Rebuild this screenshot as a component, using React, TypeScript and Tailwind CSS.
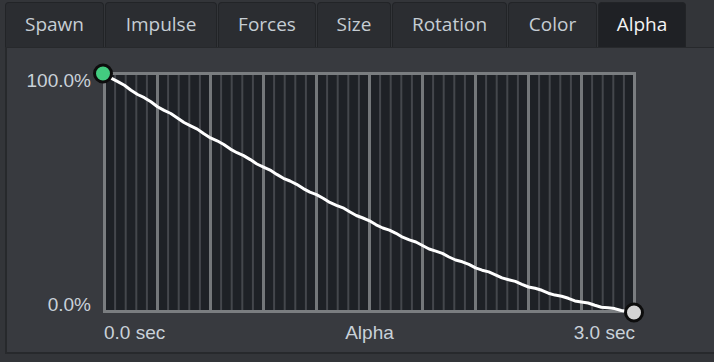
const tabs = [
  { label: 'Spawn', w: 99 },
  { label: 'Impulse', w: 112 },
  { label: 'Forces', w: 98 },
  { label: 'Size', w: 74 },
  { label: 'Rotation', w: 115 },
  { label: 'Color', w: 89 },
  { label: 'Alpha', w: 88, active: true },
]

// plot box inside the svg (svg origin sits at page x=91, y=62)
const L = 13.5
const T = 11.5
const R = 543.5
const B = 249.5

function CurveGraph() {
  const majors = Array.from({ length: 11 }, (_, i) => L + i * 53)
  const minors: number[] = []
  for (let i = 0; i < 10; i++) {
    for (let j = 1; j < 5; j++) minors.push(L + i * 53 + j * 10.6)
  }

  // alpha falloff, a bit steeper at the start
  const pts: string[] = []
  for (let i = 0; i <= 80; i++) {
    const t = i / 80
    const drop = 1 - Math.pow(1 - t, 1.4)
    const wob = i > 0 && i < 80 ? Math.sin(i * 1.7) * 0.6 : 0
    pts.push(`${(L + t * (R - L)).toFixed(1)},${(T + drop * (B - T) + wob).toFixed(1)}`)
  }

  return (
    <svg width={560} height={260} className="block overflow-visible">
      <rect x={L} y={T} width={R - L} height={B - T} fill="#1e2126" />
      {minors.map((x, i) => (
        <line key={`m${i}`} x1={x} y1={T} x2={x} y2={B} stroke="#44474c" strokeWidth={2} />
      ))}
      {majors.slice(1, -1).map((x, i) => (
        <line key={`M${i}`} x1={x} y1={T} x2={x} y2={B} stroke="#74777a" strokeWidth={3} />
      ))}
      <rect x={L} y={T} width={R - L} height={B - T} fill="none" stroke="#7a7d80" strokeWidth={3} />
      <polyline points={pts.join(' ')} fill="none" stroke="#ffffff" strokeWidth={3} strokeLinejoin="round" />
      <circle cx={L - 1.5} cy={T} r={8.5} fill="#43cc80" stroke="#0d0d0d" strokeWidth={3} />
      <circle cx={R - 0.5} cy={B + 1} r={8.5} fill="#d4d4d4" stroke="#0d0d0d" strokeWidth={3} />
    </svg>
  )
}

export default function App() {
  return (
    <div className="w-[714px] h-[362px] bg-[#333539] overflow-hidden flex flex-col">
      <div className="flex items-end gap-[1px] pl-[5px] pt-[2px] h-[47px] shrink-0">
        {tabs.map((t) => (
          <div
            key={t.label}
            style={{ width: t.w }}
            className={`h-[45px] pb-[1px] flex items-center justify-center rounded-t-[4px] border border-b-0 border-[#222427] font-['Open_Sans',sans-serif] text-[19px] ${
              t.active ? 'bg-[#1f2125] text-[#f4f4f4]' : 'bg-[#2b2d31] text-[#c6cdd4]'
            }`}
          >
            {t.label}
          </div>
        ))}
      </div>

      <div className="ml-[5px] h-[307px] shrink-0 bg-[#383a3f] border-l-2 border-t border-b-2 border-[#27292c] pt-[14px] font-['Liberation_Sans',Arial,sans-serif] text-[19px] leading-[22px] text-[#c9d1d9]">
        <div className="flex items-start">
          <div className="w-[84px] h-[246px] mt-[8px] flex flex-col justify-between items-end">
            <span>100.0%</span>
            <span>0.0%</span>
          </div>
          <CurveGraph />
        </div>
        <div className="ml-[97px] w-[531px] flex justify-between">
          <span>0.0 sec</span>
          <span>Alpha</span>
          <span>3.0 sec</span>
        </div>
      </div>
    </div>
  )
}
